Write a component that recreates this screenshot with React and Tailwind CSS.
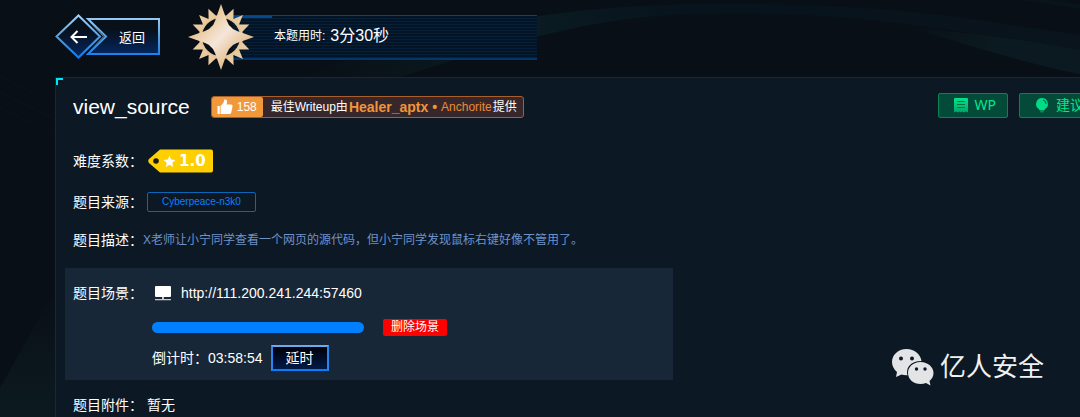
import React from 'react';

const TEETH = [24, 45, 66, 114, 135, 156, 204, 225, 246, 294, 315, 336];

function Backdrop() {
  return (
    <svg
      aria-hidden="true"
      className="pointer-events-none absolute inset-0 h-full w-full"
      viewBox="0 0 1080 417"
      preserveAspectRatio="none"
    >
      <defs>
        <linearGradient id="arcFill" x1="0" x2="1" y1="0" y2="0">
          <stop offset="0" stopColor="#0b1d22" stopOpacity="0" />
          <stop offset="0.3" stopColor="#0a1b21" />
          <stop offset="0.5" stopColor="#07131d" />
          <stop offset="1" stopColor="#09141c" />
        </linearGradient>
        <linearGradient id="wedgeFill" x1="0" x2="1" y1="0" y2="0">
          <stop offset="0" stopColor="#0b1a20" stopOpacity="0" />
          <stop offset="0.5" stopColor="#0b1a20" />
        </linearGradient>
        <linearGradient id="beamFill" x1="0" x2="0" y1="0" y2="1">
          <stop offset="0" stopColor="#0c1b20" stopOpacity="0" />
          <stop offset="1" stopColor="#0c1a20" />
        </linearGradient>
      </defs>
      <path d="M300 77C420 30 560 2 740 4S980 22 1080 35V52C960 30 860 13 740 13S560 26 400 77Z" fill="url(#arcFill)" />
      <path d="M905 27C970 33 1020 39 1080 50V74C1020 62 960 42 905 27Z" fill="url(#wedgeFill)" />
      <path d="M1020 0L1080 9V4L1050 0Z" fill="#09131c" />
      <path d="M0 388L56 288V417H0Z" fill="url(#beamFill)" />
      <path d="M0 76L56 106M0 92L56 120M0 108L56 134" stroke="#0a1118" strokeWidth="2" />
    </svg>
  );
}

function BackButton() {
  return (
    <button type="button" className="relative h-[46px] w-[106px] shrink-0 cursor-pointer pl-[64px] text-left">
      <svg aria-hidden="true" className="absolute inset-0" width="106" height="46" viewBox="0 0 106 46">
        <defs>
          <linearGradient id="backLine" x1="0" x2="0" y1="0" y2="46" gradientUnits="userSpaceOnUse">
            <stop offset="0" stopColor="#a9d3f5" />
            <stop offset="0.5" stopColor="#559fe0" />
            <stop offset="1" stopColor="#0a78f0" />
          </linearGradient>
          <linearGradient id="backFill" x1="0" x2="0" y1="0" y2="1">
            <stop offset="0.3" stopColor="#08101a" />
            <stop offset="1" stopColor="#04275f" />
          </linearGradient>
        </defs>
        <path d="M33 5H104V40H33L51 22.500Z" fill="url(#backFill)" stroke="url(#backLine)" strokeWidth="2" />
        <path d="M35 8L48.500 22.500L35 37" fill="none" stroke="url(#backLine)" strokeWidth="0.800" />
        <path d="M23.500 1.500L45 22.500L23.500 43.500L1.500 22.500Z" fill="url(#backFill)" stroke="url(#backLine)" strokeWidth="2" />
        <path d="M32 23H17M22.500 17L16.500 23L22.500 29" fill="none" stroke="#fff" strokeWidth="2" />
      </svg>
      <span className="relative text-[13px] leading-5 text-white">返回</span>
    </button>
  );
}

function StarBadge() {
  return (
    <svg aria-hidden="true" className="relative z-10 shrink-0" width="68" height="68" viewBox="-34 -34 68 68">
      <defs>
        <linearGradient id="starGold" x1="0" x2="1" y1="0" y2="1">
          <stop offset="0.200" stopColor="#e6be84" />
          <stop offset="0.500" stopColor="#f5e6da" />
          <stop offset="0.800" stopColor="#dfb57c" />
        </linearGradient>
      </defs>
      <circle r="20.500" fill="none" stroke="#e6c697" strokeWidth="3" />
      {TEETH.map((a) => (
        <path key={a} d="M-4.200 -21L0 -31L4.200 -21Z" fill="#e9cba0" transform={`rotate(${a})`} />
      ))}
      <path
        d="M0 -33L6 -16Q7.500 -11.500 10 -10Q11.500 -7.500 16 -6L33 0L16 6Q11.500 7.500 10 10Q7.500 11.500 6 16L0 33L-6 16Q-7.500 11.500 -10 10Q-11.500 7.500 -16 6L-33 0L-16 -6Q-11.500 -7.500 -10 -10Q-7.500 -11.500 -6 -16Z"
        fill="url(#starGold)"
      />
    </svg>
  );
}

function TimerBar() {
  return (
    <div className="-ml-[22px] h-[45px] w-[304px] border-t border-b-2 border-t-[#044382] border-b-[#03366a] bg-[repeating-linear-gradient(180deg,#031426_0px,#031426_2px,#06203a_2px,#06203a_3px)]">
      <div className="h-[2px] w-[39px] bg-[#04498f]" />
      <p className="flex h-[36px] items-center gap-[5px] pl-[41px] text-white">
        <span className="text-[12px]">本题用时:</span>
        <span className="text-[16px]">3分30秒</span>
      </p>
    </div>
  );
}

function ThumbIcon() {
  return (
    <svg aria-hidden="true" width="16" height="16" viewBox="0 0 16 16" fill="#fff">
      <path d="M0.500 7H2.800V15H0.500ZM3.600 7L6.500 3.800L7.200 0.800Q8.600 0 9.700 1.200Q10.600 2.400 9.600 5.500H14Q15.800 5.700 15.500 7.500L14.300 13.500Q13.900 15 12.500 15H3.600Z" />
    </svg>
  );
}

function PaperIcon() {
  return (
    <svg aria-hidden="true" width="14" height="15" viewBox="0 0 14 15">
      <defs>
        <linearGradient id="paperFill" x1="0" x2="0" y1="0" y2="1">
          <stop offset="0" stopColor="#00e68c" />
          <stop offset="1" stopColor="#03a468" />
        </linearGradient>
      </defs>
      <path d="M1 0H13Q14 0 14 1V14.500L12 13.500L10 14.500L8.500 13.500L7 14.500L5.500 13.500L4 14.500L2 13.500L0 14.500V1Q0 0 1 0Z" fill="url(#paperFill)" />
      <path d="M3 3.500H11M3 6.500H11M3 9.500H11" stroke="#067048" strokeWidth="1" />
    </svg>
  );
}

function BulbIcon() {
  return (
    <svg aria-hidden="true" width="14" height="15" viewBox="0 0 14 15">
      <path d="M7 0A6 6 0 0 1 10.500 10.800L9.500 12H4.500L3.500 10.800A6 6 0 0 1 7 0Z" fill="#00dc86" />
      <path d="M8 2Q11 2.800 11 6" fill="none" stroke="#06724a" strokeWidth="1.200" />
      <path d="M4.500 12H9.500L8.500 14.500H5.500Z" fill="#058a58" />
    </svg>
  );
}

function ActionButton({ icon, children }) {
  return (
    <button
      type="button"
      className="flex h-[25px] cursor-pointer items-center gap-[7px] rounded-[2px] border border-[#078456] bg-[#044a38] pr-[11px] pl-[15px] font-['Noto_Sans','Noto_Sans_CJK_SC',sans-serif] text-[14px] leading-5 whitespace-nowrap text-[#00e890]"
    >
      {icon}
      {children}
    </button>
  );
}

function WriteupBadge() {
  return (
    <div className="ml-[21px] flex h-[22px] items-center overflow-hidden rounded-[3px] border border-[#a85f2c] bg-[#38272a] pr-[6px] text-[12px] whitespace-nowrap text-white">
      <span className="mr-2 flex h-full w-[51px] items-center gap-1 rounded-r-[2px] bg-[#f0983a] pl-[5px]">
        <ThumbIcon />
        158
      </span>
      <span className="flex items-center">
        最佳Writeup由
        <b className="mr-1 ml-px text-[14px] text-[#f0963a]">Healer_aptx •</b>
        <span className="mr-px text-[#e88c38]">Anchorite</span>
        提供
      </span>
    </div>
  );
}

function DifficultyTag() {
  return (
    <span className="relative ml-[5px] flex h-6 w-[65px] items-center gap-[3px] pl-[15px]">
      <svg aria-hidden="true" className="absolute inset-0" width="65" height="24" viewBox="0 0 65 24">
        <path d="M12 0.500H63Q65 0.500 65 2.500V21.500Q65 23.500 63 23.500H12L1 14Q-0.500 12 1 10Z" fill="#ffcf00" />
        <circle cx="8" cy="12" r="2.800" fill="#1a1c1c" />
      </svg>
      <svg aria-hidden="true" className="relative" width="13" height="13" viewBox="0 0 24 24" fill="#fff">
        <path d="M12 1.500L15.200 8.500L23 9.300L17.200 14.500L18.800 22L12 18.200L5.200 22L6.800 14.500L1 9.300L8.800 8.500Z" />
      </svg>
      <span className="relative font-['DejaVu_Sans',sans-serif] text-[15px] leading-5 font-bold text-white">1.0</span>
    </span>
  );
}

function MonitorIcon() {
  return (
    <svg aria-hidden="true" className="ml-[2px]" width="18" height="16" viewBox="0 0 18 16">
      <rect x="1" y="1" width="16" height="11" rx="1" fill="#fff" />
      <path d="M8 12H10V14H17V15.200H1V14H8Z" fill="#c6cbd0" />
    </svg>
  );
}

function Row({ label, className, children }) {
  return (
    <div className={`flex items-center px-2 ${className}`}>
      <span className="w-[70px] shrink-0 whitespace-nowrap">{label}：</span>
      {children}
    </div>
  );
}

function Watermark() {
  return (
    <div className="absolute right-[36px] bottom-[31px] flex items-center gap-[6px]">
      <svg aria-hidden="true" width="43" height="38" viewBox="0 0 43 38">
        <g fill="#e2e4e6">
          <path d="M15.500 1C7 1 1 7 1 14C1 18 3 21.500 6 24L5 29L10.500 26.500Q13 27.500 16.500 27.300Q15 22 18 18Q22 13 30.500 13C29.500 6 23.500 1 15.500 1Z" />
          <path d="M29.500 14C22 14 17 19 17 25C17 31.500 22.500 36 29.500 36Q32.500 36 35 35L39.500 37.500L38.500 33C41 31 42.500 28 42.500 25C42.500 19 37 14 29.500 14Z" />
        </g>
        <g fill="#0e1926">
          <circle cx="10" cy="10.500" r="2" />
          <circle cx="21" cy="10.500" r="2" />
          <circle cx="25.500" cy="21" r="1.700" />
          <circle cx="34" cy="21" r="1.700" />
        </g>
      </svg>
      <span className="text-[26px] leading-9 text-[#f0f1f2]">亿人安全</span>
    </div>
  );
}

export default function App() {
  return (
    <div className="relative flex min-h-screen flex-col overflow-hidden bg-[#090f16] font-['Liberation_Sans','Noto_Sans_CJK_SC',sans-serif]">
      <Backdrop />
      <header className="relative flex h-[77px] items-center pb-[3px] pl-[55px]">
        <BackButton />
        <div className="ml-[26px] flex items-center">
          <StarBadge />
          <TimerBar />
        </div>
      </header>

      <main className="relative ml-[55px] flex-1 border-t border-l border-[#0b2b48] bg-[#0d1825] pt-[14px] pl-[9px] text-[14px] leading-5 text-white">
        <span aria-hidden="true" className="absolute top-0 left-0 h-[7px] w-[7px] border-t-2 border-l-2 border-[#00e5f5]" />

        <div className="flex h-[30px] items-center px-2">
          <h1 className="text-[21px] leading-[30px]">view_source</h1>
          <WriteupBadge />
          <div className="-mr-[24px] mb-1 ml-auto flex gap-[11px]">
            <ActionButton icon={<PaperIcon />}>WP</ActionButton>
            <ActionButton icon={<BulbIcon />}>建议</ActionButton>
          </div>
        </div>

        <Row label="难度系数" className="mt-[27px] h-6">
          <DifficultyTag />
        </Row>
        <Row label="题目来源" className="mt-[19px] h-5">
          <a
            href="#source"
            className="ml-1 flex h-5 items-center rounded-[2px] border border-[#0c66b8] px-[14px] text-[10px] text-[#0a80ff]"
          >
            Cyberpeace-n3k0
          </a>
        </Row>
        <Row label="题目描述" className="mt-[18px] h-5">
          <span className="text-[12px] text-[#6d93c8]">
            X老师让小宁同学查看一个网页的源代码，但小宁同学发现鼠标右键好像不管用了。
          </span>
        </Row>

        <section className="mt-[18px] flex w-full max-w-[608px] bg-[#182737] px-2 pt-[15px] pb-[9px]">
          <span className="w-[70px] shrink-0 whitespace-nowrap">题目场景：</span>
          <div className="ml-[9px]">
            <div className="flex h-5 items-center gap-[9px]">
              <MonitorIcon />
              <a href="http://111.200.241.244:57460">http://111.200.241.244:57460</a>
            </div>
            <div className="mt-4 flex items-center gap-[19px]">
              <div
                role="progressbar"
                aria-label="倒计时"
                aria-valuenow={100}
                className="h-[11px] w-[212px] rounded-full bg-[#0080ff]"
              />
              <button type="button" className="h-[17px] cursor-pointer rounded-[2px] bg-[#ff0000] px-2 text-[12px] leading-[17px]">
                删除场景
              </button>
            </div>
            <div className="mt-[9px] flex items-center gap-2">
              <span>倒计时：03:58:54</span>
              <button
                type="button"
                className="h-[26px] cursor-pointer border-2 border-t-[#6aaaf0] border-r-[#2a86ee] border-b-[#0a7cf5] border-l-[#2a86ee] bg-linear-to-b from-[#00030a] to-[#021a48] px-[13px] leading-[22px]"
              >
                延时
              </button>
            </div>
          </div>
        </section>

        <Row label="题目附件" className="mt-[15px] h-5">
          <span className="ml-1">暂无</span>
        </Row>
      </main>
      <Watermark />
    </div>
  );
}
